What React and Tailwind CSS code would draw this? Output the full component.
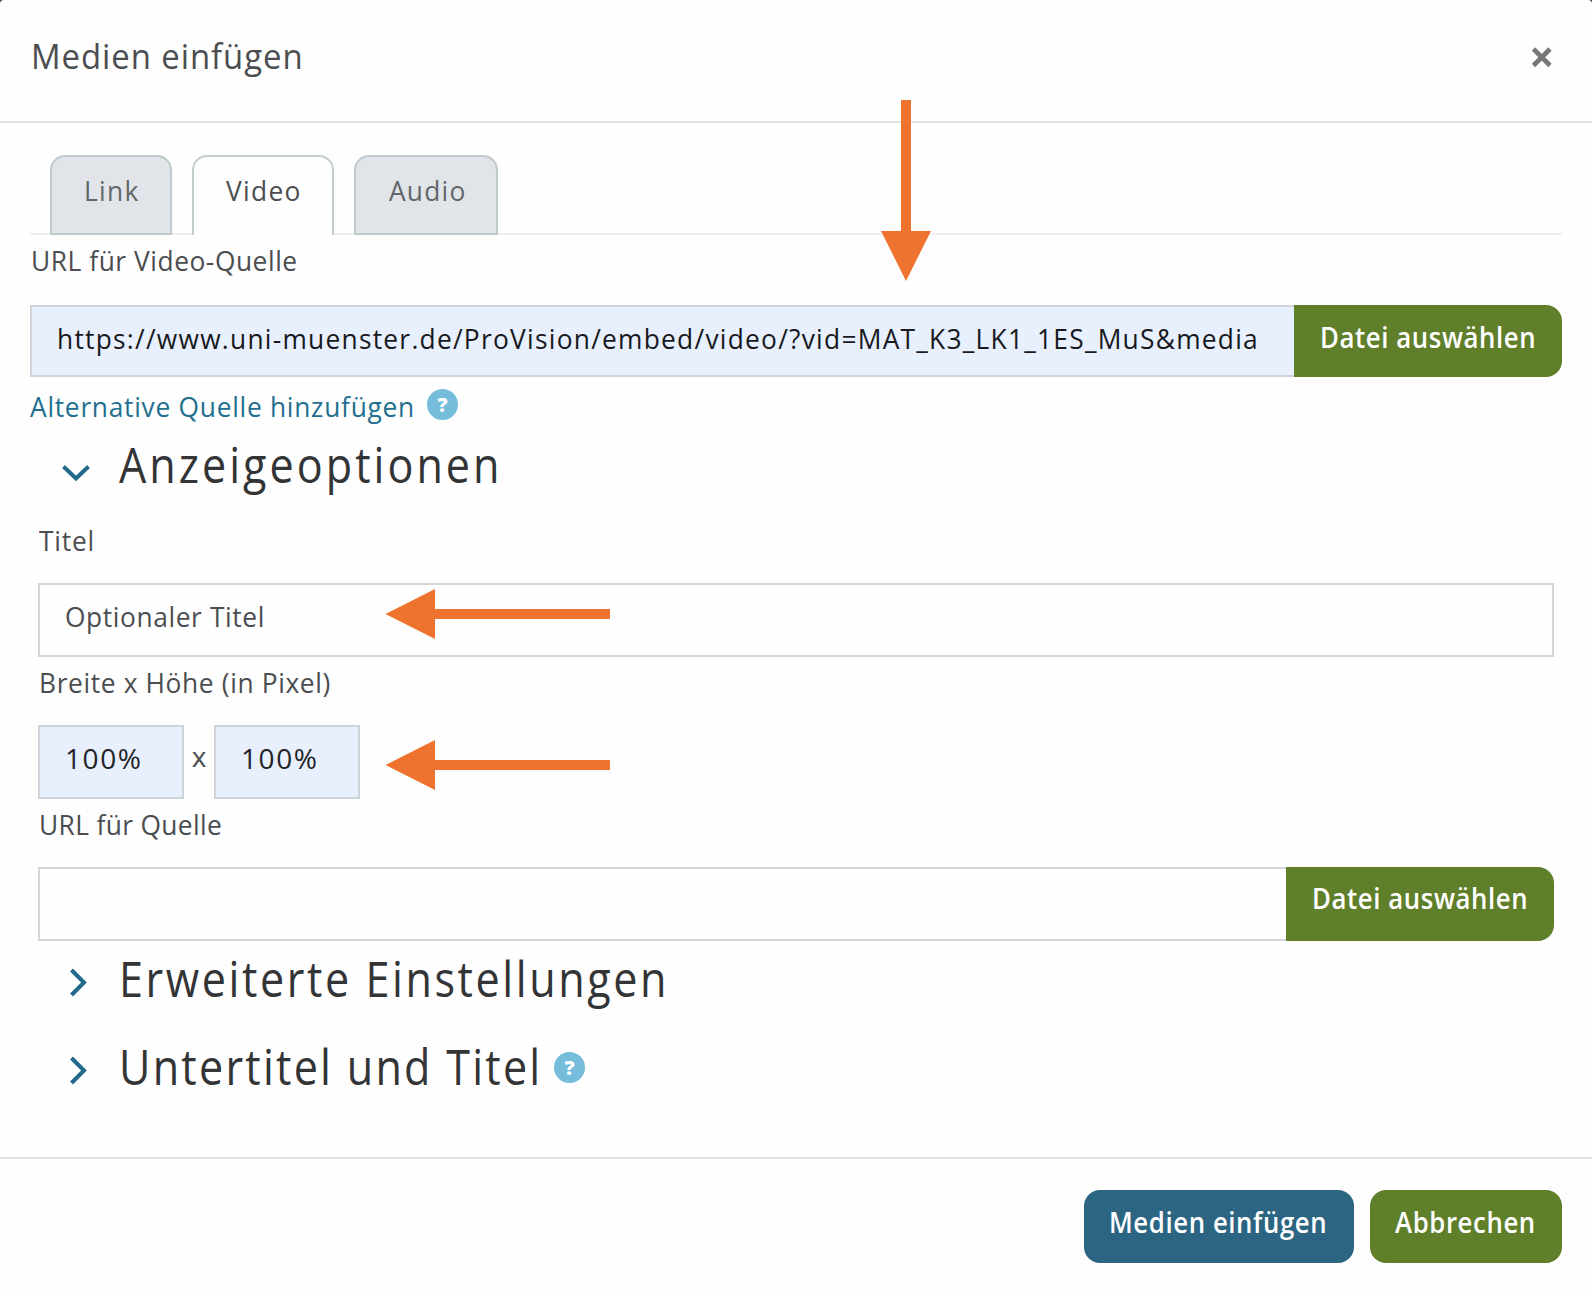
import React from "react";

// Slightly narrowed, letter-spaced text.
function T({ children, className = "" }) {
  return <span className={`inline-block origin-left scale-x-[0.94] ${className}`}>{children}</span>;
}

function ButtonText({ children }) {
  return <span className="inline-block origin-left scale-x-[0.92] tracking-[0.65px]">{children}</span>;
}

function HeadingText({ children, className = "" }) {
  return <span className={`inline-block origin-left scale-x-[0.88] ${className}`}>{children}</span>;
}

function HelpIcon({ className = "" }) {
  return (
    <span
      className={`inline-flex size-[31px] shrink-0 items-center justify-center rounded-full bg-[#76bddc] text-[20px] leading-none font-extrabold text-white ${className}`}
    >
      ?
    </span>
  );
}

function Chevron({ open }) {
  return open ? (
    <svg className="mt-[29px] ml-[32px] h-[18px] w-[29px] shrink-0" viewBox="0 0 29 18" fill="none">
      <path d="M1.5 2.5 14 14.5 26.5 2.5" stroke="#226a8b" strokeWidth="4" />
    </svg>
  ) : (
    <svg className="mt-[27px] ml-[39px] h-[29px] w-[18px] shrink-0" viewBox="0 0 18 29" fill="none">
      <path d="M2.5 2 15 14.5 2.5 27" stroke="#226a8b" strokeWidth="4" />
    </svg>
  );
}

const arrowColor = "#ee732e";

function LeftArrow({ className }) {
  return (
    <svg className={`absolute left-[385px] h-[50px] w-[225px] ${className}`} viewBox="0 0 225 50">
      <path d="M0.5 25 50 0V20H225V30H50V50Z" fill={arrowColor} />
    </svg>
  );
}

export default function App() {
  return (
    <div className="h-[1292px] w-[1592px] bg-[#3c4a50]">
      <div className="relative flex h-full flex-col overflow-hidden rounded-t-[4px] bg-[#fefefe] font-['Open_Sans',sans-serif] text-[28px] whitespace-nowrap text-[#4b4d50]">
        <header className="flex h-[123px] shrink-0 items-start justify-between border-b-2 border-[#e0e3e8] pr-[39px] pl-[31px]">
          <h1 className="text-[35px] leading-[112px]">
            <T className="tracking-[1px]">Medien einfügen</T>
          </h1>
          <svg className="mt-[47px] h-[21px] w-[22px]" viewBox="0 0 22 21">
            <path d="M2.5 2 19 18.5M19 2 2.5 18.5" stroke="#777" strokeWidth="4.6" />
          </svg>
        </header>

        <main className="flex h-[1036px] shrink-0 flex-col border-b-2 border-[#e0e3e8] px-[30px] pt-[32px]">
          <nav className="flex h-[80px] shrink-0 border-b-2 border-[#efefef] pl-[20px] leading-[66px]">
            <div className="mr-[20px] h-[80px] w-[122px] rounded-t-[15px] border-2 border-[#bfc8cb] bg-[#e1e5ea] pl-[32px] text-[#636669]">
              <T className="tracking-[1.4px]">Link</T>
            </div>
            <div className="mr-[20px] h-[80px] w-[142px] rounded-t-[15px] border-2 border-b-0 border-[#c3cccf] bg-[#fefefe] pl-[32px]">
              <T className="tracking-[1.4px]">Video</T>
            </div>
            <div className="h-[80px] w-[144px] rounded-t-[15px] border-2 border-[#bfc8cb] bg-[#e1e5ea] pl-[33px] text-[#636669]">
              <T className="tracking-[1.3px]">Audio</T>
            </div>
          </nav>

          <label className="h-[70px] shrink-0 pl-px leading-[51px]">
            <T className="tracking-[0.59px]">URL für Video-Quelle</T>
          </label>
          <div className="flex h-[72px] shrink-0">
            <div className="w-[1264px] shrink-0 border-2 border-r-0 border-[#ced4da] bg-[#e8effd] pl-[25px] leading-[62px] text-[#17191c]">
              <T className="tracking-[1.34px]">
                https://www.uni-muenster.de/ProVision/embed/video/?vid=MAT_K3_LK1_1ES_MuS&amp;media
              </T>
            </div>
            <button className="flex w-[268px] rounded-r-[16px] bg-[#5f7f2a] pl-[26px] leading-[64px] font-semibold text-white">
              <ButtonText>Datei auswählen</ButtonText>
            </button>
          </div>
          <div className="flex h-[58px] shrink-0 text-[#226f8f]">
            <a className="w-[397px] leading-[58px]">
              <T className="tracking-[0.78px]">Alternative Quelle hinzufügen</T>
            </a>
            <HelpIcon className="mt-[12px]" />
          </div>

          <div className="flex h-[75px] shrink-0">
            <Chevron open />
            <h2 className="ml-[28px] text-[49px] leading-[59px] text-[#323436]">
              <HeadingText className="tracking-[3.43px]">Anzeigeoptionen</HeadingText>
            </h2>
          </div>

          <section className="flex shrink-0 flex-col px-[8px]">
            <label className="h-[73px] pl-px leading-[61px]">
              <T className="tracking-[0.85px]">Titel</T>
            </label>
            <div className="h-[74px] border-2 border-[#d2d7dc] pl-[25px] leading-[62px]">
              <T className="tracking-[0.65px]">Optionaler Titel</T>
            </div>
            <label className="h-[68px] pl-px leading-[50px]">
              <T className="tracking-[0.68px]">Breite x Höhe (in Pixel)</T>
            </label>
            <div className="flex h-[74px] leading-[62px]">
              <div className="w-[146px] border-2 border-[#ced4da] bg-[#e8effd] pl-[25px] tracking-[1.6px] text-[#222427]">
                100%
              </div>
              <span className="w-[30px] text-center">x</span>
              <div className="w-[146px] border-2 border-[#ced4da] bg-[#e8effd] pl-[25px] tracking-[1.6px] text-[#222427]">
                100%
              </div>
            </div>
            <label className="h-[68px] pl-px leading-[50px]">
              <T className="tracking-[0.38px]">URL für Quelle</T>
            </label>
            <div className="flex h-[74px]">
              <div className="flex-1 border-2 border-r-0 border-[#d2d7dc]" />
              <button className="flex w-[268px] rounded-r-[16px] bg-[#5f7f2a] pl-[26px] leading-[63px] font-semibold text-white">
                <ButtonText>Datei auswählen</ButtonText>
              </button>
            </div>
          </section>

          <div className="flex h-[88px] shrink-0">
            <Chevron />
            <h2 className="ml-[32px] text-[49px] leading-[75px] text-[#323436]">
              <HeadingText className="tracking-[2.93px]">Erweiterte Einstellungen</HeadingText>
            </h2>
          </div>
          <div className="flex h-[88px] shrink-0">
            <Chevron />
            <h2 className="ml-[32px] w-[435px] text-[49px] leading-[75px] text-[#323436]">
              <HeadingText className="tracking-[2.55px]">Untertitel und Titel</HeadingText>
            </h2>
            <HelpIcon className="mt-[23px]" />
          </div>
        </main>

        <footer className="flex justify-end gap-[16px] pt-[31px] pr-[30px] leading-[64px] font-semibold text-white">
          <button className="flex h-[73px] w-[270px] rounded-[16px] bg-[#2c6581] pl-[25px]">
            <ButtonText>Medien einfügen</ButtonText>
          </button>
          <button className="flex h-[73px] w-[192px] rounded-[16px] bg-[#5f7f2a] pl-[25px]">
            <ButtonText>Abbrechen</ButtonText>
          </button>
        </footer>

        <svg className="absolute top-[100px] left-[881px] h-[181px] w-[50px]" viewBox="0 0 50 181">
          <path d="M20 0H30V131H50L25 181 0 131H20Z" fill={arrowColor} />
        </svg>
        <LeftArrow className="top-[589px]" />
        <LeftArrow className="top-[740px]" />
      </div>
    </div>
  );
}
